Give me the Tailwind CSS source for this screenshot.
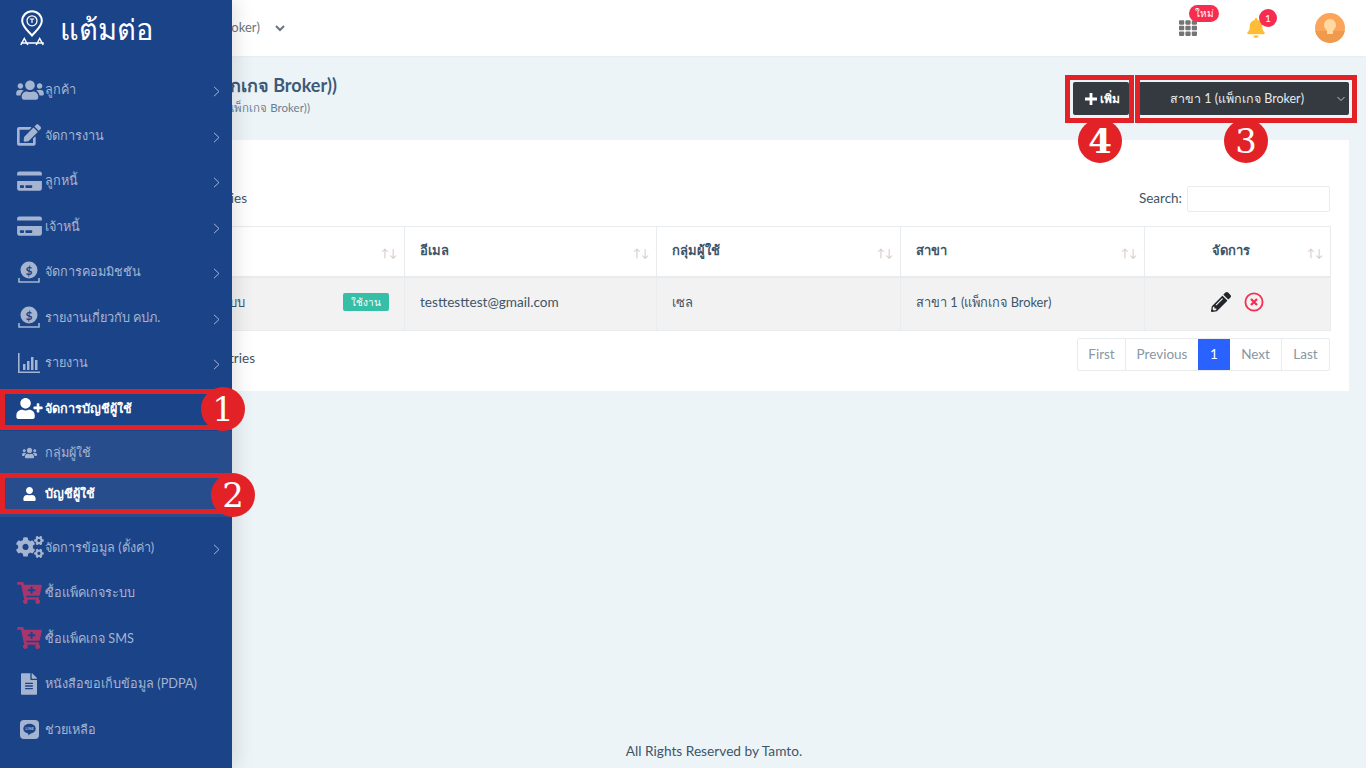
<!DOCTYPE html>
<html lang="th">
<head>
<meta charset="utf-8">
<script src="https://cdn.jsdelivr.net/npm/@tailwindcss/browser@4"></script>
<title>บัญชีผู้ใช้</title>
</head>
<body class="font-['Lato','Noto_Sans',sans-serif]">
<div class="relative w-[1366px] h-[768px] overflow-hidden bg-[#edf4f8] text-[#3e5569] flex flex-col">

  <!-- top bar -->
  <header class="h-14 shrink-0 bg-white flex items-center pr-[21px] shadow-[0_1px_2px_rgba(0,0,0,0.03)]">
    <div class="w-[260px] text-right text-[13px] text-[#6c757d] whitespace-nowrap overflow-hidden">สาขา 1 (แพ็กเกจ Broker)</div>
    <svg class="ml-[15px] w-2.5 h-2.5 text-[#6c757d]" viewBox="0 0 10 10" fill="none" stroke="currentColor" stroke-width="2"><path d="M1 3l4 4 4-4"/></svg>
    <div class="ml-auto flex items-center">
      <div class="relative w-[18px] h-[18px] mr-[50px]">
        <svg class="w-[18px] h-[18px] text-[#757575]" viewBox="0 0 512 512" fill="currentColor"><path d="M149.333 56v80c0 13.255-10.745 24-24 24H24c-13.255 0-24-10.745-24-24V56c0-13.255 10.745-24 24-24h101.333c13.255 0 24 10.745 24 24zm181.334 240v-80c0-13.255-10.745-24-24-24H205.333c-13.255 0-24 10.745-24 24v80c0 13.255 10.745 24 24 24h101.333c13.256 0 24.001-10.745 24.001-24zm32-240v80c0 13.255 10.745 24 24 24H488c13.255 0 24-10.745 24-24V56c0-13.255-10.745-24-24-24H386.667c-13.255 0-24 10.745-24 24zm-32 80V56c0-13.255-10.745-24-24-24H205.333c-13.255 0-24 10.745-24 24v80c0 13.255 10.745 24 24 24h101.333c13.256 0 24.001-10.745 24.001-24zm-205.334 56H24c-13.255 0-24 10.745-24 24v80c0 13.255 10.745 24 24 24h101.333c13.255 0 24-10.745 24-24v-80c0-13.255-10.745-24-24-24zM0 376v80c0 13.255 10.745 24 24 24h101.333c13.255 0 24-10.745 24-24v-80c0-13.255-10.745-24-24-24H24c-13.255 0-24 10.745-24 24zm386.667-56H488c13.255 0 24-10.745 24-24v-80c0-13.255-10.745-24-24-24H386.667c-13.255 0-24 10.745-24 24v80c0 13.255 10.745 24 24 24zm0 160H488c13.255 0 24-10.745 24-24v-80c0-13.255-10.745-24-24-24H386.667c-13.255 0-24 10.745-24 24v80c0 13.255 10.745 24 24 24zM181.333 376v80c0 13.255 10.745 24 24 24h101.333c13.255 0 24-10.745 24-24v-80c0-13.255-10.745-24-24-24H205.333c-13.255 0-24 10.745-24 24z"/></svg>
        <span class="absolute left-[10px] top-[-14px] w-[30px] h-[17px] rounded-full bg-[#f62d51] text-white text-[10px] leading-[16px] text-center">ใหม่</span>
      </div>
      <div class="relative w-[18px] h-5 mr-[50px]">
        <svg class="w-[18px] h-5 text-[#ffbc34]" viewBox="0 0 448 512" fill="currentColor"><path d="M224 512c35.32 0 63.97-28.65 63.97-64H160.03c0 35.35 28.65 64 63.97 64zm215.39-149.71c-19.32-20.76-55.47-51.99-55.47-154.29 0-77.7-54.48-139.9-127.94-155.16V32c0-17.67-14.32-32-31.98-32s-31.98 14.33-31.98 32v20.84C118.56 68.1 64.08 130.3 64.08 208c0 102.3-36.15 133.53-55.47 154.29-6 6.45-8.66 14.16-8.61 21.71.11 16.4 12.98 32 32.1 32h383.8c19.12 0 32-15.6 32.1-32 .05-7.55-2.61-15.27-8.61-21.71z"/></svg>
        <span class="absolute left-[12px] top-[-9px] w-[18px] h-[18px] rounded-full bg-[#f62d51] text-white text-[10px] leading-[18px] text-center">1</span>
      </div>
      <div class="w-[30px] h-[30px] rounded-full overflow-hidden bg-[#fba55b] flex flex-col items-center">
        <svg class="w-[30px] h-[30px]" viewBox="0 0 30 30"><rect y="18" width="30" height="12" fill="#f09a4e"/><path d="M15 6a6 6 0 0 0-6 6c0 3 2 4 3 6v3h6v-3c1-2 3-3 3-6a6 6 0 0 0-6-6z" fill="#ffd9a0"/></svg>
      </div>
    </div>
  </header>

  <!-- main content, its left part lies beneath the sidebar -->
  <main class="flex-1 flex flex-col pr-[17px] min-h-0">
    <div class="h-[84px] shrink-0 flex items-start justify-between">
      <div class="w-[337px] pt-[18px] text-right whitespace-nowrap overflow-hidden">
        <div class="text-[18px] leading-[22px] font-bold text-[#3c5a78]">บัญชีผู้ใช้ (สาขา 1 (แพ็กเกจ Broker))</div>
        <div class="mt-[4px] text-[11.5px] leading-4 text-[#6c7f90] pr-[27px]">หน้าหลัก / สาขา 1 (แพ็กเกจ Broker))</div>
      </div>
      <div class="flex items-center pt-[26px] gap-[10px]">
        <button class="w-14 h-[33px] rounded-[2px] bg-[#343a40] text-white text-[12px] font-bold flex items-center justify-center gap-[3px] pl-[2px]">
          <svg class="w-3 h-3" viewBox="0 0 12 12" fill="currentColor"><path d="M4.6 0h2.8v4.6H12v2.8H7.4V12H4.6V7.4H0V4.6h4.6z"/></svg>เพิ่ม
        </button>
        <div class="relative w-[210px] h-[33px] rounded-[2px] bg-[#343a40] text-[#e8eaec] text-[12.5px] flex items-center justify-center pr-[14px] pt-[2px]">
          สาขา 1 (แพ็กเกจ Broker)
          <svg class="absolute right-[4px] top-[13px] w-2 h-2 text-[#c4c8cc]" viewBox="0 0 8 8" fill="none" stroke="currentColor" stroke-width="1"><path d="M.5 2l3.5 3.5L7.5 2"/></svg>
        </div>
      </div>
    </div>

    <section class="h-[251px] shrink-0 bg-white pl-5 pr-[19px] flex flex-col">
      <div class="h-[86px] shrink-0 flex items-center justify-between pt-[32px] pb-0">
        <div class="relative top-[-1px] w-[227px] text-right text-[13.5px] whitespace-nowrap overflow-hidden">Show 10 entries</div>
        <label class="flex items-center gap-[5px] text-[13.5px]"><span class="relative top-[-1px]">Search:</span>
          <input class="w-[143px] h-[26px] bg-white border border-[#e9ecef] rounded-[2px]">
        </label>
      </div>
      <table class="table-fixed w-[1310px] border-collapse text-[13px]">
        <thead>
          <tr class="h-[50px] text-left font-bold">
            <th class="w-[384px] border border-[#e9ecef] border-b-2 px-[15px] relative"><span class="absolute right-[7px] top-[18px] text-[11px] text-[#c5ccd3] font-normal">↑↓</span></th>
            <th class="w-[252px] border border-[#e9ecef] border-b-2 px-[15px] relative"><span class="relative top-[-1px]">อีเมล</span><span class="absolute right-[7px] top-[18px] text-[11px] text-[#c5ccd3] font-normal">↑↓</span></th>
            <th class="w-[244px] border border-[#e9ecef] border-b-2 px-[15px] relative"><span class="relative top-[-1px]">กลุ่มผู้ใช้</span><span class="absolute right-[7px] top-[18px] text-[11px] text-[#c5ccd3] font-normal">↑↓</span></th>
            <th class="w-[244px] border border-[#e9ecef] border-b-2 px-[15px] relative"><span class="relative top-[-1px]">สาขา</span><span class="absolute right-[7px] top-[18px] text-[11px] text-[#c5ccd3] font-normal">↑↓</span></th>
            <th class="w-[186px] border border-[#e9ecef] border-b-2 pl-[2px] pr-[15px] relative text-center"><span class="relative top-[-1px]">จัดการ</span><span class="absolute right-[7px] top-[18px] text-[11px] text-[#c5ccd3] font-normal">↑↓</span></th>
          </tr>
        </thead>
        <tbody>
          <tr class="h-[54px] bg-[#f2f2f2]">
            <td class="border border-[#e9ecef] pr-[15px] pb-[3px]">
              <div class="flex items-center justify-between">
                <span class="w-[224px] text-right whitespace-nowrap overflow-hidden">ผู้ดูแลระบบ</span>
                <span class="w-[46px] h-[18px] rounded-[2px] bg-[#36bea6] text-white text-[10px] leading-[18px] text-center">ใช้งาน</span>
              </div>
            </td>
            <td class="border border-[#e9ecef] px-[15px] pb-[3px] text-[13.6px]">testtesttest@gmail.com</td>
            <td class="border border-[#e9ecef] px-[15px] pb-[3px]">เซล</td>
            <td class="border border-[#e9ecef] px-[15px] pb-[3px] text-[12.8px]">สาขา 1 (แพ็กเกจ Broker)</td>
            <td class="border border-[#e9ecef] px-[15px] pb-[3px]">
              <div class="flex items-center justify-center gap-[13px]">
                <svg class="w-5 h-5 text-[#212529]" viewBox="0 0 512 512" fill="currentColor"><path d="M497.9 142.1l-46.1 46.1c-4.7 4.7-12.3 4.7-17 0l-111-111c-4.7-4.7-4.7-12.3 0-17l46.1-46.1c18.7-18.7 49.1-18.7 67.9 0l60.1 60.1c18.8 18.7 18.8 49.1 0 67.9zM284.2 99.8L21.6 362.4.4 483.9c-2.9 16.4 11.4 30.6 27.8 27.8l121.5-21.3 262.6-262.6c4.7-4.7 4.7-12.3 0-17l-111-111c-4.8-4.7-12.4-4.7-17.1 0zM124.1 339.9c-5.5-5.5-5.5-14.3 0-19.8l154-154c5.5-5.5 14.3-5.5 19.8 0s5.5 14.3 0 19.8l-154 154c-5.5 5.5-14.3 5.5-19.8 0zM88 424h48v36.3l-64.5 11.3-31.1-31.1L51.7 376H88v48z"/></svg>
                <svg class="w-5 h-5 text-[#f62d51]" viewBox="0 0 20 20" fill="none" stroke="currentColor"><circle cx="10" cy="10" r="8.6" stroke-width="1.8"/><path d="M7 7l6 6M13 7l-6 6" stroke-width="2.2"/></svg>
              </div>
            </td>
          </tr>
        </tbody>
      </table>
      <div class="flex items-start justify-between mt-[7px]">
        <div class="w-[235px] pt-[10px] text-right text-[13.5px] whitespace-nowrap overflow-hidden">Showing 1 to 1 of 1 entries</div>
        <nav class="flex h-[33px] text-[13.5px] text-[#8a96a3] border border-[#e9ecef] rounded-[2px]">
          <span class="w-[47px] flex items-center justify-center">First</span>
          <span class="w-[73px] flex items-center justify-center border-l border-[#e9ecef]">Previous</span>
          <span class="w-[32px] flex items-center justify-center bg-[#2962ff] text-white">1</span>
          <span class="w-[51px] flex items-center justify-center">Next</span>
          <span class="w-[48px] flex items-center justify-center border-l border-[#e9ecef]">Last</span>
        </nav>
      </div>
    </section>

    <footer class="mt-auto h-[34px] shrink-0 pl-[79px] flex items-center justify-center text-[13.7px] text-[#3e5569]">All Rights Reserved by Tamto.</footer>
  </main>

  <!-- sidebar overlays the page -->
  <aside class="absolute inset-y-0 left-0 w-[232px] bg-[#1b4388] text-[#a5b5d1] text-[12.7px] shadow-[4px_0_18px_rgba(0,0,0,0.12)]">
    <div class="h-[67px] flex items-start pl-[20px] pt-[10px] text-white">
      <svg class="w-[24px] h-[36px]" viewBox="0 0 24 36" fill="none" stroke="currentColor"><path d="M12 1.2a9.8 9.8 0 0 0-9.8 9.8c0 5.6 5.3 9.2 9.8 14.5 4.5-5.3 9.8-8.9 9.8-14.5A9.8 9.8 0 0 0 12 1.2z" stroke-width="2"/><circle cx="12" cy="10.8" r="5" stroke-width="1.3"/><path d="M9.8 9h4.4M12 9v4" stroke-width="1.2"/><path d="M.8 35l3.5-6.5L7.8 35M16.2 35l3.5-6.5 3.5 6.5M.8 33h23" stroke-width="1.5"/></svg>
      <span class="ml-[16px] text-[29px] leading-[38px] font-normal">แต้มต่อ</span>
    </div>
    <nav>
      <a class="h-[45.5px] flex items-center pl-4 pr-3"><svg class="w-[28px] h-[22px] shrink-0" viewBox="0 0 640 512" fill="currentColor"><path d="M96 224c35.3 0 64-28.7 64-64s-28.7-64-64-64-64 28.7-64 64 28.7 64 64 64zm448 0c35.3 0 64-28.7 64-64s-28.7-64-64-64-64 28.7-64 64 28.7 64 64 64zm32 32h-64c-17.6 0-33.5 7.1-45.1 18.6 40.3 22.1 68.9 62 75.1 109.4h66c17.7 0 32-14.3 32-32v-32c0-35.3-28.7-64-64-64zm-256 0c61.9 0 112-50.1 112-112S381.9 32 320 32 208 82.1 208 144s50.1 112 112 112zm76.8 32h-8.3c-20.8 10-43.9 16-68.5 16s-47.6-6-68.5-16h-8.3C179.6 288 128 339.6 128 403.2V432c0 26.5 21.5 48 48 48h288c26.5 0 48-21.5 48-48v-28.8c0-63.6-51.6-115.2-115.2-115.2zm-223.7-13.4C161.5 263.1 145.6 256 128 256H64c-35.3 0-64 28.7-64 64v32c0 17.7 14.3 32 32 32h65.9c6.3-47.4 34.9-87.3 75.2-109.4z"/></svg><span class="ml-[1px]">ลูกค้า</span><svg class="ml-auto mt-1 w-[7px] h-[11px]" viewBox="0 0 7 11" fill="none" stroke="currentColor"><path d="M1 .8l5 4.7-5 4.7"/></svg></a>
      <a class="h-[45.5px] flex items-center pl-[17px] pr-3"><svg class="w-[24px] h-[22px] shrink-0" viewBox="0 0 576 512" fill="currentColor"><path d="M402.6 83.2l90.2 90.2c3.8 3.8 3.8 10 0 13.8L274.4 405.6l-92.8 10.3c-12.4 1.4-22.9-9.1-21.5-21.5l10.3-92.8L388.8 83.2c3.8-3.8 10-3.8 13.8 0zm162-22.9l-48.8-48.8c-15.2-15.2-39.9-15.2-55.2 0l-35.4 35.4c-3.8 3.8-3.8 10 0 13.8l90.2 90.2c3.8 3.8 10 3.8 13.8 0l35.4-35.4c15.2-15.3 15.2-40 0-55.2zM384 346.2V448H64V128h229.8c3.2 0 6.2-1.3 8.5-3.5l40-40c7.6-7.6 2.2-20.5-8.5-20.5H48C21.5 64 0 85.5 0 112v352c0 26.5 21.5 48 48 48h352c26.5 0 48-21.5 48-48V306.2c0-10.7-12.9-16-20.5-8.5l-40 40c-2.2 2.3-3.5 5.3-3.5 8.5z"/></svg><span class="ml-1">จัดการงาน</span><svg class="ml-auto mt-1 w-[7px] h-[11px]" viewBox="0 0 7 11" fill="none" stroke="currentColor"><path d="M1 .8l5 4.7-5 4.7"/></svg></a>
      <a class="h-[45.5px] flex items-center pl-[17px] pr-3"><svg class="w-[25px] h-[22px] shrink-0" viewBox="0 0 576 512" fill="currentColor"><path d="M0 432c0 26.5 21.5 48 48 48h480c26.5 0 48-21.5 48-48V256H0v176zm192-68c0-6.6 5.4-12 12-12h136c6.6 0 12 5.4 12 12v40c0 6.6-5.4 12-12 12H204c-6.6 0-12-5.4-12-12v-40zm-128 0c0-6.6 5.4-12 12-12h72c6.6 0 12 5.4 12 12v40c0 6.6-5.4 12-12 12H76c-6.6 0-12-5.4-12-12v-40zM576 80v48H0V80c0-26.5 21.5-48 48-48h480c26.5 0 48 21.5 48 48z"/></svg><span class="ml-[3px]">ลูกหนี้</span><svg class="ml-auto mt-1 w-[7px] h-[11px]" viewBox="0 0 7 11" fill="none" stroke="currentColor"><path d="M1 .8l5 4.7-5 4.7"/></svg></a>
      <a class="h-[45.5px] flex items-center pl-[17px] pr-3"><svg class="w-[25px] h-[22px] shrink-0" viewBox="0 0 576 512" fill="currentColor"><path d="M0 432c0 26.5 21.5 48 48 48h480c26.5 0 48-21.5 48-48V256H0v176zm192-68c0-6.6 5.4-12 12-12h136c6.6 0 12 5.4 12 12v40c0 6.6-5.4 12-12 12H204c-6.6 0-12-5.4-12-12v-40zm-128 0c0-6.6 5.4-12 12-12h72c6.6 0 12 5.4 12 12v40c0 6.6-5.4 12-12 12H76c-6.6 0-12-5.4-12-12v-40zM576 80v48H0V80c0-26.5 21.5-48 48-48h480c26.5 0 48 21.5 48 48z"/></svg><span class="ml-[3px]">เจ้าหนี้</span><svg class="ml-auto mt-1 w-[7px] h-[11px]" viewBox="0 0 7 11" fill="none" stroke="currentColor"><path d="M1 .8l5 4.7-5 4.7"/></svg></a>
      <a class="h-[45.5px] flex items-center pl-[18px] pr-3"><svg class="w-[22px] h-[22px] shrink-0" viewBox="0 0 22 22"><circle cx="11" cy="9" r="8.5" fill="currentColor"/><text x="11" y="13.5" text-anchor="middle" font-size="12" font-weight="700" fill="#1b4388">$</text><path d="M1 17v4h20v-4" fill="none" stroke="currentColor" stroke-width="1.6"/></svg><span class="ml-[5px]">จัดการคอมมิชชัน</span><svg class="ml-auto mt-1 w-[7px] h-[11px]" viewBox="0 0 7 11" fill="none" stroke="currentColor"><path d="M1 .8l5 4.7-5 4.7"/></svg></a>
      <a class="h-[45.5px] flex items-center pl-[18px] pr-3"><svg class="w-[22px] h-[22px] shrink-0" viewBox="0 0 22 22"><circle cx="11" cy="9" r="8.5" fill="currentColor"/><text x="11" y="13.5" text-anchor="middle" font-size="12" font-weight="700" fill="#1b4388">$</text><path d="M1 17v4h20v-4" fill="none" stroke="currentColor" stroke-width="1.6"/></svg><span class="ml-[5px]">รายงานเกี่ยวกับ คปภ.</span><svg class="ml-auto mt-1 w-[7px] h-[11px]" viewBox="0 0 7 11" fill="none" stroke="currentColor"><path d="M1 .8l5 4.7-5 4.7"/></svg></a>
      <a class="h-[45.5px] flex items-center pl-[18px] pr-3"><svg class="w-[22px] h-[20px] shrink-0" viewBox="0 0 22 20" fill="currentColor"><path d="M0 0h1.6v18.4H22V20H0z"/><path d="M5 11h2.5v6H5zM9 8h2.5v9H9zM13 4h2.5v13H13zM17 7h2.5v10H17z"/></svg><span class="ml-[5px]">รายงาน</span><svg class="ml-auto mt-1 w-[7px] h-[11px]" viewBox="0 0 7 11" fill="none" stroke="currentColor"><path d="M1 .8l5 4.7-5 4.7"/></svg></a>
      <a class="h-[45.5px] flex items-center pl-4 pr-3 text-white font-bold"><svg class="w-[27px] h-[21px] shrink-0" viewBox="0 0 640 512" fill="currentColor"><path d="M624 208h-64v-64c0-8.8-7.2-16-16-16h-32c-8.8 0-16 7.2-16 16v64h-64c-8.8 0-16 7.2-16 16v32c0 8.8 7.2 16 16 16h64v64c0 8.8 7.2 16 16 16h32c8.8 0 16-7.2 16-16v-64h64c8.8 0 16-7.2 16-16v-32c0-8.8-7.2-16-16-16zm-400 48c70.7 0 128-57.3 128-128S294.7 0 224 0 96 57.3 96 128s57.3 128 128 128zm89.6 32h-16.7c-22.2 10.2-46.9 16-72.9 16s-50.6-5.8-72.9-16h-16.7C60.2 288 0 348.2 0 422.4V464c0 26.5 21.5 48 48 48h352c26.5 0 48-21.5 48-48v-41.6c0-74.2-60.2-134.4-134.4-134.4z"/></svg><span class="ml-[2px]">จัดการบัญชีผู้ใช้</span></a>
      <div class="h-[86px] bg-[#284d8c] flex flex-col pt-[1px]">
        <a class="h-[42px] flex items-center pl-[22px]"><svg class="w-[15px] h-3 shrink-0" viewBox="0 0 640 512" fill="currentColor"><path d="M96 224c35.3 0 64-28.7 64-64s-28.7-64-64-64-64 28.7-64 64 28.7 64 64 64zm448 0c35.3 0 64-28.7 64-64s-28.7-64-64-64-64 28.7-64 64 28.7 64 64 64zm32 32h-64c-17.6 0-33.5 7.1-45.1 18.6 40.3 22.1 68.9 62 75.1 109.4h66c17.7 0 32-14.3 32-32v-32c0-35.3-28.7-64-64-64zm-256 0c61.9 0 112-50.1 112-112S381.9 32 320 32 208 82.1 208 144s50.1 112 112 112zm76.8 32h-8.3c-20.8 10-43.9 16-68.5 16s-47.6-6-68.5-16h-8.3C179.6 288 128 339.6 128 403.2V432c0 26.5 21.5 48 48 48h288c26.5 0 48-21.5 48-48v-28.8c0-63.6-51.6-115.2-115.2-115.2zm-223.7-13.4C161.5 263.1 145.6 256 128 256H64c-35.3 0-64 28.7-64 64v32c0 17.7 14.3 32 32 32h65.9c6.3-47.4 34.9-87.3 75.2-109.4z"/></svg><span class="ml-2">กลุ่มผู้ใช้</span></a>
        <a class="h-[40px] flex items-center pl-[23px] text-white font-bold"><svg class="w-[13px] h-[14px] shrink-0" viewBox="0 0 448 512" fill="currentColor"><path d="M224 256c70.7 0 128-57.3 128-128S294.7 0 224 0 96 57.3 96 128s57.3 128 128 128zm89.6 32h-16.7c-22.2 10.2-46.9 16-72.9 16s-50.6-5.8-72.9-16h-16.7C60.2 288 0 348.2 0 422.4V464c0 26.5 21.5 48 48 48h352c26.5 0 48-21.5 48-48v-41.6c0-74.2-60.2-134.4-134.4-134.4z"/></svg><span class="ml-[9px]">บัญชีผู้ใช้</span></a>
      </div>
      <a class="mt-[7.5px] h-[45.5px] flex items-center pl-4 pr-3"><svg class="w-[28px] h-[22px] shrink-0" viewBox="0 0 640 512" fill="currentColor"><path d="M512.1 191l-8.2 14.3c-3 5.3-9.4 7.5-15.1 5.4-11.8-4.4-22.6-10.7-32.1-18.6-4.6-3.8-5.8-10.5-2.8-15.7l8.2-14.3c-6.9-8-12.3-17.3-15.9-27.4h-16.5c-6 0-11.2-4.3-12.2-10.3-2-12-2.1-24.6 0-37.1 1-6 6.2-10.4 12.2-10.4h16.5c3.6-10.1 9-19.4 15.9-27.4l-8.2-14.3c-3-5.2-1.9-11.9 2.8-15.7 9.5-7.9 20.4-14.2 32.1-18.6 5.7-2.1 12.1.1 15.1 5.4l8.2 14.3c10.5-1.9 21.2-1.9 31.7 0L552 6.3c3-5.3 9.4-7.5 15.1-5.4 11.8 4.4 22.6 10.7 32.1 18.6 4.6 3.8 5.8 10.5 2.8 15.7l-8.2 14.3c6.9 8 12.3 17.3 15.9 27.4h16.5c6 0 11.2 4.3 12.2 10.3 2 12 2.1 24.6 0 37.1-1 6-6.2 10.4-12.2 10.4h-16.5c-3.6 10.1-9 19.4-15.9 27.4l8.2 14.3c3 5.2 1.9 11.9-2.8 15.7-9.5 7.9-20.4 14.2-32.1 18.6-5.7 2.1-12.1-.1-15.1-5.4l-8.2-14.3c-10.4 1.9-21.2 1.9-31.7 0zm-10.5-58.8c38.5 29.6 82.4-14.3 52.8-52.8-38.5-29.7-82.4 14.3-52.8 52.8zM386.3 286.1l33.7 16.8c10.1 5.8 14.5 18.1 10.5 29.1-8.9 24.2-26.4 46.4-42.6 65.8-7.4 8.9-20.2 11.1-30.3 5.3l-29.1-16.8c-16 13.7-34.6 24.6-54.9 31.7v33.6c0 11.6-8.3 21.6-19.7 23.6-24.6 4.2-50.4 4.4-75.9 0-11.5-2-20-11.9-20-23.6V418c-20.3-7.2-38.9-18-54.9-31.7L74 403c-10 5.8-22.9 3.6-30.3-5.3-16.2-19.4-33.3-41.6-42.2-65.7-4-10.9.4-23.2 10.5-29.1l33.3-16.8c-3.9-20.9-3.9-42.4 0-63.4L12 205.8c-10.1-5.8-14.6-18.1-10.5-29 8.9-24.2 26-46.4 42.2-65.8 7.4-8.9 20.2-11.1 30.3-5.3l29.1 16.8c16-13.7 34.6-24.6 54.9-31.7V57.1c0-11.5 8.2-21.5 19.6-23.5 24.6-4.2 50.5-4.4 76-.1 11.5 2 20 11.9 20 23.6v33.6c20.3 7.2 38.9 18 54.9 31.7l29.1-16.8c10-5.8 22.9-3.6 30.3 5.3 16.2 19.4 33.2 41.6 42.1 65.8 4 10.9.1 23.2-10 29.1l-33.7 16.8c3.9 21 3.9 42.5 0 63.5zm-117.6 21.1c59.2-77-28.7-164.9-105.7-105.7-59.2 77 28.7 164.9 105.7 105.7zm243.4 182.7l-8.2 14.3c-3 5.3-9.4 7.5-15.1 5.4-11.8-4.4-22.6-10.7-32.1-18.6-4.6-3.8-5.8-10.5-2.8-15.7l8.2-14.3c-6.9-8-12.3-17.3-15.9-27.4h-16.5c-6 0-11.2-4.3-12.2-10.3-2-12-2.1-24.6 0-37.1 1-6 6.2-10.4 12.2-10.4h16.5c3.6-10.1 9-19.4 15.9-27.4l-8.2-14.3c-3-5.2-1.9-11.9 2.8-15.7 9.5-7.9 20.4-14.2 32.1-18.6 5.7-2.1 12.1.1 15.1 5.4l8.2 14.3c10.5-1.9 21.2-1.9 31.7 0l8.2-14.3c3-5.3 9.4-7.5 15.1-5.4 11.8 4.4 22.6 10.7 32.1 18.6 4.6 3.8 5.8 10.5 2.8 15.7l-8.2 14.3c6.9 8 12.3 17.3 15.9 27.4h16.5c6 0 11.2 4.3 12.2 10.3 2 12 2.1 24.6 0 37.1-1 6-6.2 10.4-12.2 10.4h-16.5c-3.6 10.1-9 19.4-15.9 27.4l8.2 14.3c3 5.2 1.9 11.9-2.8 15.7-9.5 7.9-20.4 14.2-32.1 18.6-5.7 2.1-12.1-.1-15.1-5.4l-8.2-14.3c-10.4 1.9-21.2 1.9-31.7 0zM501.6 431c38.5 29.6 82.4-14.3 52.8-52.8-38.5-29.6-82.4 14.3-52.8 52.8z"/></svg><span class="ml-[1px]">จัดการข้อมูล (ตั้งค่า)</span><svg class="ml-auto mt-1 w-[7px] h-[11px]" viewBox="0 0 7 11" fill="none" stroke="currentColor"><path d="M1 .8l5 4.7-5 4.7"/></svg></a>
      <a class="h-[45.5px] flex items-center pl-[17px]"><svg class="w-[25px] h-[22px] shrink-0 text-[#a8366c]" viewBox="0 0 576 512" fill="currentColor"><path d="M504.717 320H211.572l6.545 32h268.418c15.401 0 26.816 14.301 23.403 29.319l-5.517 24.276C523.112 414.668 536 433.828 536 456c0 31.202-25.519 56.444-56.824 55.994-29.823-.429-54.35-24.631-55.155-54.447-.44-16.287 6.085-31.049 16.803-41.548H231.176C241.553 426.165 248 440.326 248 456c0 31.813-26.528 57.431-58.67 55.938-28.54-1.325-51.751-24.385-53.251-52.917-1.158-22.034 10.436-41.455 28.051-51.586L93.883 64H24C10.745 64 0 53.255 0 40V24C0 10.745 10.745 0 24 0h102.529c11.401 0 21.228 8.021 23.513 19.19L159.208 64H551.99c15.401 0 26.816 14.301 23.403 29.319l-47.273 208C525.637 312.246 515.923 320 504.717 320zM408 168h-48v-40c0-8.837-7.163-16-16-16h-16c-8.837 0-16 7.163-16 16v40h-48c-8.837 0-16 7.163-16 16v16c0 8.837 7.163 16 16 16h48v40c0 8.837 7.163 16 16 16h16c8.837 0 16-7.163 16-16v-40h48c8.837 0 16-7.163 16-16v-16c0-8.837-7.163-16-16-16z"/></svg><span class="ml-[3px]">ซื้อแพ็คเกจระบบ</span></a>
      <a class="h-[45.5px] flex items-center pl-[17px]"><svg class="w-[25px] h-[22px] shrink-0 text-[#a8366c]" viewBox="0 0 576 512" fill="currentColor"><path d="M504.717 320H211.572l6.545 32h268.418c15.401 0 26.816 14.301 23.403 29.319l-5.517 24.276C523.112 414.668 536 433.828 536 456c0 31.202-25.519 56.444-56.824 55.994-29.823-.429-54.35-24.631-55.155-54.447-.44-16.287 6.085-31.049 16.803-41.548H231.176C241.553 426.165 248 440.326 248 456c0 31.813-26.528 57.431-58.67 55.938-28.54-1.325-51.751-24.385-53.251-52.917-1.158-22.034 10.436-41.455 28.051-51.586L93.883 64H24C10.745 64 0 53.255 0 40V24C0 10.745 10.745 0 24 0h102.529c11.401 0 21.228 8.021 23.513 19.19L159.208 64H551.99c15.401 0 26.816 14.301 23.403 29.319l-47.273 208C525.637 312.246 515.923 320 504.717 320zM408 168h-48v-40c0-8.837-7.163-16-16-16h-16c-8.837 0-16 7.163-16 16v40h-48c-8.837 0-16 7.163-16 16v16c0 8.837 7.163 16 16 16h48v40c0 8.837 7.163 16 16 16h16c8.837 0 16-7.163 16-16v-40h48c8.837 0 16-7.163 16-16v-16c0-8.837-7.163-16-16-16z"/></svg><span class="ml-[3px]">ซื้อแพ็คเกจ SMS</span></a>
      <a class="h-[45.5px] flex items-center pl-[21px]"><svg class="w-4 h-[22px] shrink-0" viewBox="0 0 384 512" fill="currentColor"><path d="M224 136V0H24C10.7 0 0 10.7 0 24v464c0 13.3 10.7 24 24 24h336c13.3 0 24-10.7 24-24V160H248c-13.2 0-24-10.8-24-24zm64 236c0 6.6-5.4 12-12 12H108c-6.6 0-12-5.4-12-12v-8c0-6.6 5.4-12 12-12h168c6.6 0 12 5.4 12 12v8zm0-64c0 6.6-5.4 12-12 12H108c-6.6 0-12-5.4-12-12v-8c0-6.6 5.4-12 12-12h168c6.6 0 12 5.4 12 12v8zm0-72v8c0 6.6-5.4 12-12 12H108c-6.6 0-12-5.4-12-12v-8c0-6.6 5.4-12 12-12h168c6.6 0 12 5.4 12 12zm96-114.1v6.1H256V0h6.1c6.4 0 12.5 2.5 17 7l97.9 98c4.5 4.5 7 10.6 7 16.9z"/></svg><span class="ml-2">หนังสือขอเก็บข้อมูล (PDPA)</span></a>
      <a class="h-[45.5px] flex items-center pl-5"><svg class="w-[19px] h-[19px] shrink-0" viewBox="0 0 19 19"><rect width="19" height="19" rx="4" fill="currentColor"/><ellipse cx="9.5" cy="8.8" rx="6.2" ry="5" fill="#1b4388"/><path d="M8 13h3L8.5 15.5z" fill="#1b4388"/><text x="9.5" y="10.2" text-anchor="middle" font-size="4" font-weight="700" fill="#a5b5d1">LINE</text></svg><span class="ml-[6px]">ช่วยเหลือ</span></a>
    </nav>
  </aside>

  <!-- tutorial callouts -->
  <div class="absolute left-0 top-[389px] w-[232px] h-[41px] border-[5px] border-[#e32227]"></div>
  <div class="absolute left-0 top-[473px] w-[232px] h-[41px] border-[5px] border-[#e32227]"></div>
  <div class="absolute left-[1065px] top-[75px] w-[69px] h-[48px] border-[5px] border-[#e32227]"></div>
  <div class="absolute left-[1135px] top-[75px] w-[222px] h-[48px] border-[5px] border-[#e32227]"></div>
  <div class="absolute left-[201px] top-[387px] w-11 h-11 rounded-full bg-[#e32227] text-white text-[34px] leading-[44px] text-center font-['DejaVu_Serif',serif]">1</div>
  <div class="absolute left-[211px] top-[473px] w-11 h-11 rounded-full bg-[#e32227] text-white text-[34px] leading-[44px] text-center font-['DejaVu_Serif',serif]">2</div>
  <div class="absolute left-[1224px] top-[119px] w-11 h-11 rounded-full bg-[#e32227] text-white text-[34px] leading-[44px] text-center font-['DejaVu_Serif',serif]">3</div>
  <div class="absolute left-[1078px] top-[119px] w-11 h-11 rounded-full bg-[#e32227] text-white text-[34px] leading-[44px] text-center font-bold font-['DejaVu_Serif',serif]">4</div>
</div>
</body>
</html>
